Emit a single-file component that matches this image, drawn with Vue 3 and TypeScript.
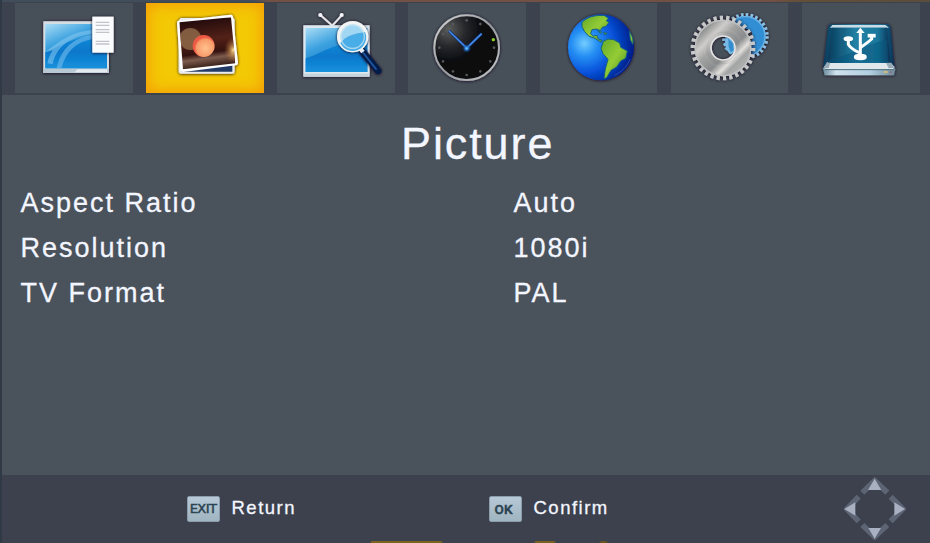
<script setup lang="ts">
interface Setting {
  label: string
  value: string
}

const settings: Setting[] = [
  { label: 'Aspect Ratio', value: 'Auto' },
  { label: 'Resolution', value: '1080i' },
  { label: 'TV Format', value: 'PAL' },
]

const clockDots: number[] = [0, 30, 90, 120, 150, 180, 210, 240, 270, 300, 330]
</script>

<template>
  <div class="screen">
    <nav class="tabs">
      <div class="tab">
        <svg viewBox="45 9 353 270">
          <defs>
            <linearGradient id="tv" x1="0" y1="0" x2=".6" y2="1">
              <stop offset="0" stop-color="#a9dcf5" /><stop offset=".4" stop-color="#3da2e0" /><stop offset="1" stop-color="#0568b8" />
            </linearGradient>
            <linearGradient id="deep" x1="0" y1="0" x2="0" y2="1">
              <stop offset="0" stop-color="#168bd8" /><stop offset=".5" stop-color="#0878cc" /><stop offset="1" stop-color="#1791dc" />
            </linearGradient>
            <filter id="shade" x="-20%" y="-20%" width="140%" height="140%">
              <feDropShadow dx="0" dy="1" stdDeviation="5" flood-color="#160c1c" flood-opacity="1" />
            </filter>
          </defs>
          <g filter="url(#shade)">
            <path d="M130 64H327V219H130Z" fill="#d5dde3" />
            <path d="M130 206H327V219H130Z" fill="#b9c9d4" />
            <path d="M232 208h90v9h-98z" fill="#e4eaf0" />
            <path d="M136 72H321V205H136Z" fill="url(#tv)" />
            <path d="M136 157C175 142 220 105 321 105V205H136Z" fill="url(#deep)" />
            <path d="M136 157C180 120 225 92 278 90V101C218 108 168 136 158 193L142 190C145 174 151 164 158 151Z" fill="#8acaf0" opacity=".55" />
            <path d="M170 204C184 143 220 114 278 104V117C226 125 197 158 184 205Z" fill="#73bcec" opacity=".6" />
          </g>
          <g filter="url(#shade)"><path d="M277 50H341V158H277Z" fill="#fafbfd" /></g>
          <path d="M287 67H328M287 76H328M287 89H328M287 97H328M287 124H328M287 132H328" stroke="#c3c2cb" stroke-width="4" />
        </svg>
      </div>

      <div class="tab active">
        <svg viewBox="18 9 353 270">
          <defs>
            <linearGradient id="photo" x1="0" y1="0" x2=".15" y2="1">
              <stop offset="0" stop-color="#160509" /><stop offset=".48" stop-color="#522117" /><stop offset=".72" stop-color="#35120f" /><stop offset=".82" stop-color="#7d5b4d" /><stop offset="1" stop-color="#2d1710" />
            </linearGradient>
            <radialGradient id="spot" cx=".58" cy=".6"><stop offset="0" stop-color="#ffc18d" /><stop offset=".8" stop-color="#f89b6a" /><stop offset="1" stop-color="#ed5945" /></radialGradient>
            <radialGradient id="flare"><stop offset="0" stop-color="#ffe497" /><stop offset=".4" stop-color="#d49b55" stop-opacity=".6" /><stop offset="1" stop-color="#9b5632" stop-opacity="0" /></radialGradient>
            <clipPath id="photoClip"><path d="M118 67L273 52L286 190L129 208Z" /></clipPath>
          </defs>
          <g filter="url(#shade)">
            <path d="M122 54H277Q284 54 284 62V215Q284 221 277 221H124Q116 221 116 213V62Z" fill="#e9eceb" />
            <path d="M125 62H277V215H125Z" fill="#203a66" />
            <path d="M116 62L271 44Q278 43 279 50L294 188Q295 195 288 196L130 216Q122 217 121 209L111 70Q110 63 116 62Z" fill="#fff" />
          </g>
          <g clip-path="url(#photoClip)">
            <path d="M115 50H295V213H115Z" fill="url(#photo)" />
            <circle cx="151" cy="117" r="33" fill="#8e6949" opacity=".85" />
            <circle cx="191" cy="138" r="33" fill="url(#spot)" />
            <ellipse cx="280" cy="150" rx="28" ry="40" fill="url(#flare)" />
          </g>
        </svg>
      </div>

      <div class="tab">
        <svg viewBox="22 9 353 270">
          <g filter="url(#shade)">
            <path d="M152 45L188 77L216 46" fill="none" stroke="#e5e5ea" stroke-width="6" />
            <circle cx="152" cy="45" r="6" fill="#f5f5fa" /><circle cx="216" cy="45" r="6" fill="#f5f5fa" />
            <path d="M101 76H300V230H101Z" fill="#dce7ef" />
            <path d="M108 84H293V216H108Z" fill="url(#tv)" />
            <path d="M108 175C166 156 182 130 293 122V216H108Z" fill="url(#deep)" />
            <path d="M104 224H297" stroke="#c3d3da" stroke-width="6" />
          </g>
          <g filter="url(#shade)">
            <path d="M278 154L325 212" stroke="#061b48" stroke-width="21" stroke-linecap="round" />
            <path d="M281 159L319 207" stroke="#1c559d" stroke-width="6" stroke-linecap="round" />
            <path d="M271 145L280 156" stroke="#e6edf4" stroke-width="13" />
            <circle cx="249" cy="110" r="42" fill="#a2d7f3" stroke="#f2f4f4" stroke-width="10" />
            <path d="M212 129C230 106 255 101 286 96A38 38 0 0 1 212 129Z" fill="#48ade8" />
            <circle cx="249" cy="110" r="35" fill="none" stroke="#d1e7f1" stroke-width="4" opacity=".7" />
          </g>
        </svg>
      </div>

      <div class="tab">
        <svg viewBox="25 9 353 270">
          <defs>
            <radialGradient id="dial" cx=".22" cy=".22" r=".5"><stop offset="0" stop-color="#5a5d5c" /><stop offset=".5" stop-color="#292a2d" /><stop offset="1" stop-color="#090b10" /></radialGradient>
            <linearGradient id="rim" x1="0" y1="0" x2="1" y2="1"><stop offset="0" stop-color="#d5d6d7" /><stop offset=".5" stop-color="#96989c" /><stop offset="1" stop-color="#c5c8ca" /></linearGradient>
            <radialGradient id="pivot"><stop offset="0" stop-color="#8dd4ff" /><stop offset=".4" stop-color="#2278d8" /><stop offset="1" stop-color="#104080" stop-opacity="0" /></radialGradient>
          </defs>
          <circle cx="201" cy="143" r="97" fill="url(#dial)" stroke="url(#rim)" stroke-width="6" filter="url(#shade)" />
          <circle v-for="angle in clockDots" :key="angle" cx="201" cy="61" r="4" fill="#54585c" :transform="`rotate(${angle} 201 143)`" />
          <path d="M148 93L201 144L246 101" fill="none" stroke="#112d67" stroke-width="9" />
          <path d="M148 93L201 144L246 101" fill="none" stroke="#4389e8" stroke-width="5" />
          <circle cx="201" cy="145" r="13" fill="url(#pivot)" />
          <circle cx="281" cy="119" r="5" fill="#8fd12c" />
        </svg>
      </div>

      <div class="tab">
        <svg viewBox="24 9 353 270">
          <defs>
            <radialGradient id="ocean" cx=".25" cy=".44" r=".75"><stop offset="0" stop-color="#73cdff" /><stop offset=".26" stop-color="#2690f4" /><stop offset=".58" stop-color="#0754dc" /><stop offset="1" stop-color="#031c87" /></radialGradient>
            <linearGradient id="land" x1="0" y1="0" x2="1" y2="1"><stop offset="0" stop-color="#64a929" /><stop offset=".5" stop-color="#94cc36" /><stop offset="1" stop-color="#458a19" /></linearGradient>
          </defs>
          <circle cx="207" cy="142" r="99" fill="url(#ocean)" filter="url(#shade)" />
          <g fill="url(#land)" stroke="#17637d" stroke-width="3">
            <path d="M150 67C165 51 189 44 218 47L229 55L223 62L231 67L222 79L211 82L205 92L193 87L180 89L176 101L184 108L195 106L199 117L211 121L207 127L189 115L171 109L158 95L150 80Z" />
            <path d="M214 124L228 117L245 119L263 129L266 142L286 153L281 175L266 183L254 201L237 211L224 233L216 236L220 207L228 178L213 161L207 145Z" />
            <path d="M197 91L209 97L204 100ZM215 97L226 100L219 105Z" /><path d="M292 94C301 107 306 123 302 133L295 119Z" />
          </g>
          <path d="M294 178C286 198 271 214 248 226" fill="none" stroke="#5376bd" stroke-width="3" opacity=".55" />
        </svg>
      </div>

      <div class="tab">
        <svg viewBox="21 9 353 270">
          <defs>
            <linearGradient id="metal" x1="0" y1="0" x2="1" y2="1"><stop offset="0" stop-color="#858788" /><stop offset=".22" stop-color="#cfcdcb" /><stop offset=".38" stop-color="#a2a2a2" /><stop offset=".62" stop-color="#898b8c" /><stop offset=".76" stop-color="#e2e0dd" /><stop offset=".85" stop-color="#a3a4a4" /><stop offset="1" stop-color="#b1b1b2" /></linearGradient>
          </defs>
          <g fill="none" filter="url(#shade)">
            <circle cx="244" cy="109" r="64" stroke="#8fc1e5" stroke-width="12" pathLength="112" stroke-dasharray="2 2" />
            <circle cx="244" cy="109" r="42" stroke="#328ed4" stroke-width="38" />
            <circle cx="244" cy="109" r="59" stroke="#6db4e6" stroke-width="4" />
          </g>
          <g fill="none" filter="url(#shade)">
            <circle cx="177" cy="144" r="90" stroke="#c7c8c9" stroke-width="14" pathLength="120" stroke-dasharray="2 2" />
            <circle cx="177" cy="144" r="60" stroke="url(#metal)" stroke-width="50" />
            <circle cx="177" cy="144" r="83" stroke="#bec0c2" stroke-width="4" />
            <circle cx="177" cy="144" r="57" stroke="#d7d7d7" stroke-width="1" opacity=".5" />
            <circle cx="177" cy="144" r="48" stroke="#777" stroke-width="1" opacity=".5" />
            <circle cx="177" cy="144" r="36" stroke="#e2e3e4" stroke-width="5" />
          </g>
          <path d="M181 119L190 113L202 120L210 135V154L202 163L193 157L189 151L181 147L186 140L178 133L184 126Z" fill="#77b9e5" />
          <path d="M193 116L206 129L209 151L200 156L194 141Z" fill="#328ccd" />
        </svg>
      </div>

      <div class="tab">
        <svg viewBox="21 9 353 270">
          <defs>
            <linearGradient id="drive"><stop offset="0" stop-color="#073b5b" /><stop offset=".45" stop-color="#2381a5" /><stop offset=".8" stop-color="#1b789c" /><stop offset="1" stop-color="#082d50" /></linearGradient>
            <linearGradient id="base"><stop offset="0" stop-color="#698a9c" /><stop offset=".18" stop-color="#d0e3ed" /><stop offset=".65" stop-color="#b1cfdf" /><stop offset="1" stop-color="#708999" /></linearGradient>
          </defs>
          <g filter="url(#shade)">
            <path d="M84 205L92 193H294L301 208L297 226H89Z" fill="url(#base)" />
            <path d="M110 73H274Q285 74 287 84L298 198Q300 208 291 208H93Q83 208 85 198L99 84Q101 74 110 73Z" fill="url(#drive)" />
            <path d="M112 75H271L282 83H105Z" fill="#c9dce6" />
            <path d="M110 83H276L287 188H97Z" fill="url(#drive)" />
            <path d="M97 189H288L298 200Q299 207 290 207H94Q85 207 87 201Z" fill="#e1e7eb" />
            <path d="M84 206L96 186L106 188L101 204ZM273 188H288L298 203L281 205Z" fill="#98aab6" />
            <path d="M107 178C165 166 209 135 275 117L280 188H97Z" fill="#07547b" opacity=".48" />
            <path d="M92 209H296" stroke="#52717f" stroke-width="3" />
          </g>
          <g fill="none" stroke="#fff" stroke-width="9">
            <path d="M196 170V96M160 117V133Q166 145 193 158M230 109V117Q219 127 196 143" />
            <ellipse cx="196" cy="171" rx="15" ry="5" fill="#fff" /><ellipse cx="160" cy="116" rx="10" ry="3" fill="#fff" />
            <path d="M218 107H242" stroke-width="11" />
          </g>
          <path d="M184 99L196 83L209 99Z" fill="#fff" />
          <ellipse cx="272" cy="216" rx="7" ry="4" fill="#c8b980" /><circle cx="287" cy="217" r="4" fill="#84788c" />
        </svg>
      </div>
    </nav>

    <main class="panel">
      <h1>Picture</h1>
      <dl>
        <div v-for="item in settings" :key="item.label" class="row">
          <dt>{{ item.label }}</dt>
          <dd>{{ item.value }}</dd>
        </div>
      </dl>
    </main>

    <footer>
      <div class="hint"><kbd>EXIT</kbd><span>Return</span></div>
      <div class="hint"><kbd class="ok">OK</kbd><span>Confirm</span></div>
      <svg class="arrows" viewBox="129 51 186 189">
        <path d="M184 98L221 62L259 98M173 110L138 147L173 184M269 110L305 147L269 184M184 195L221 230L259 195" fill="none" stroke="#5d6474" stroke-width="17" />
        <path d="M221 56L241 90H201ZM221 236L202 204H240ZM130 147L163 127V167ZM312 147L280 127V167Z" fill="#a8b0c1" />
      </svg>
    </footer>
  </div>
</template>

<style>
body {
  margin: 0;
  overflow: hidden;
}
</style>

<style scoped>
.screen {
  box-sizing: border-box;
  width: 930px;
  height: 543px;
  display: flex;
  flex-direction: column;
  background: #4a525c;
  border-left: 2px solid #303946;
  font-family: "Liberation Sans", Arial, sans-serif;
  color: #f3f6ff;
  -webkit-text-stroke: .3px #f3f6ff;
}
.tabs {
  box-sizing: border-box;
  height: 95px;
  flex: none;
  display: flex;
  gap: 13.5px;
  padding: 1px 0 0 13px;
  background: #3c424e;
  border-top: 2px solid;
  border-image: linear-gradient(90deg, #424d5c 0 27%, #725044 29% 83%, #625038 86%, #5b4d3c) 2 0 0;
}
.tab {
  width: 117.67px;
  height: 90px;
  flex: none;
  background: #474f59;
}
.tab svg {
  display: block;
  width: 100%;
  height: 100%;
}
.active {
  background: #f3c805;
  box-shadow: inset 0 0 14px 2px #f59b08;
}
.panel {
  height: 380px;
  flex: none;
}
h1 {
  margin: 0;
  padding: 23px 0 0 399px;
  font-size: 45px;
  line-height: 52px;
  font-weight: 400;
  letter-spacing: 1.9px;
}
dl {
  margin: 0;
  padding: 11px 0 0 18.5px;
}
.row {
  display: grid;
  grid-template-columns: 493px 1fr;
  height: 45px;
  align-items: center;
  font-size: 27px;
  letter-spacing: 2px;
}
dd {
  margin: 0;
}
footer {
  height: 68px;
  flex: none;
  display: grid;
  grid-template-columns: 302px 355px 64px;
  padding-left: 184.5px;
  background:
    linear-gradient(90deg, transparent 368px, #7a641e 370px 439px, transparent 441px 532px, #79621f 534px 552px, transparent 554px 597px, #635420 599px 604px, transparent 606px) 0 100% / 100% 2px no-repeat,
    #3c414d;
}
.hint {
  height: 68px;
  display: flex;
  align-items: center;
  gap: 12px;
  font-size: 18.5px;
  letter-spacing: 1.5px;
}
.hint span {
  padding-bottom: 3px;
}
kbd {
  box-sizing: border-box;
  width: 33px;
  height: 26px;
  border-radius: 2px;
  background: linear-gradient(#b8c8d7, #9fb5c0);
  border: 1px solid #8b9dac;
  color: #2b4352;
  font: 400 13px/24px "DejaVu Sans", sans-serif;
  letter-spacing: -.6px;
  text-align: center;
  -webkit-text-stroke: .5px #2b4352;
}
.ok {
  font-family: Roboto, sans-serif;
  font-weight: 500;
  font-size: 13.5px;
  letter-spacing: 0;
  padding-right: 3px;
}
.arrows {
  width: 62px;
  height: 63px;
  padding-top: 2px;
}
</style>
